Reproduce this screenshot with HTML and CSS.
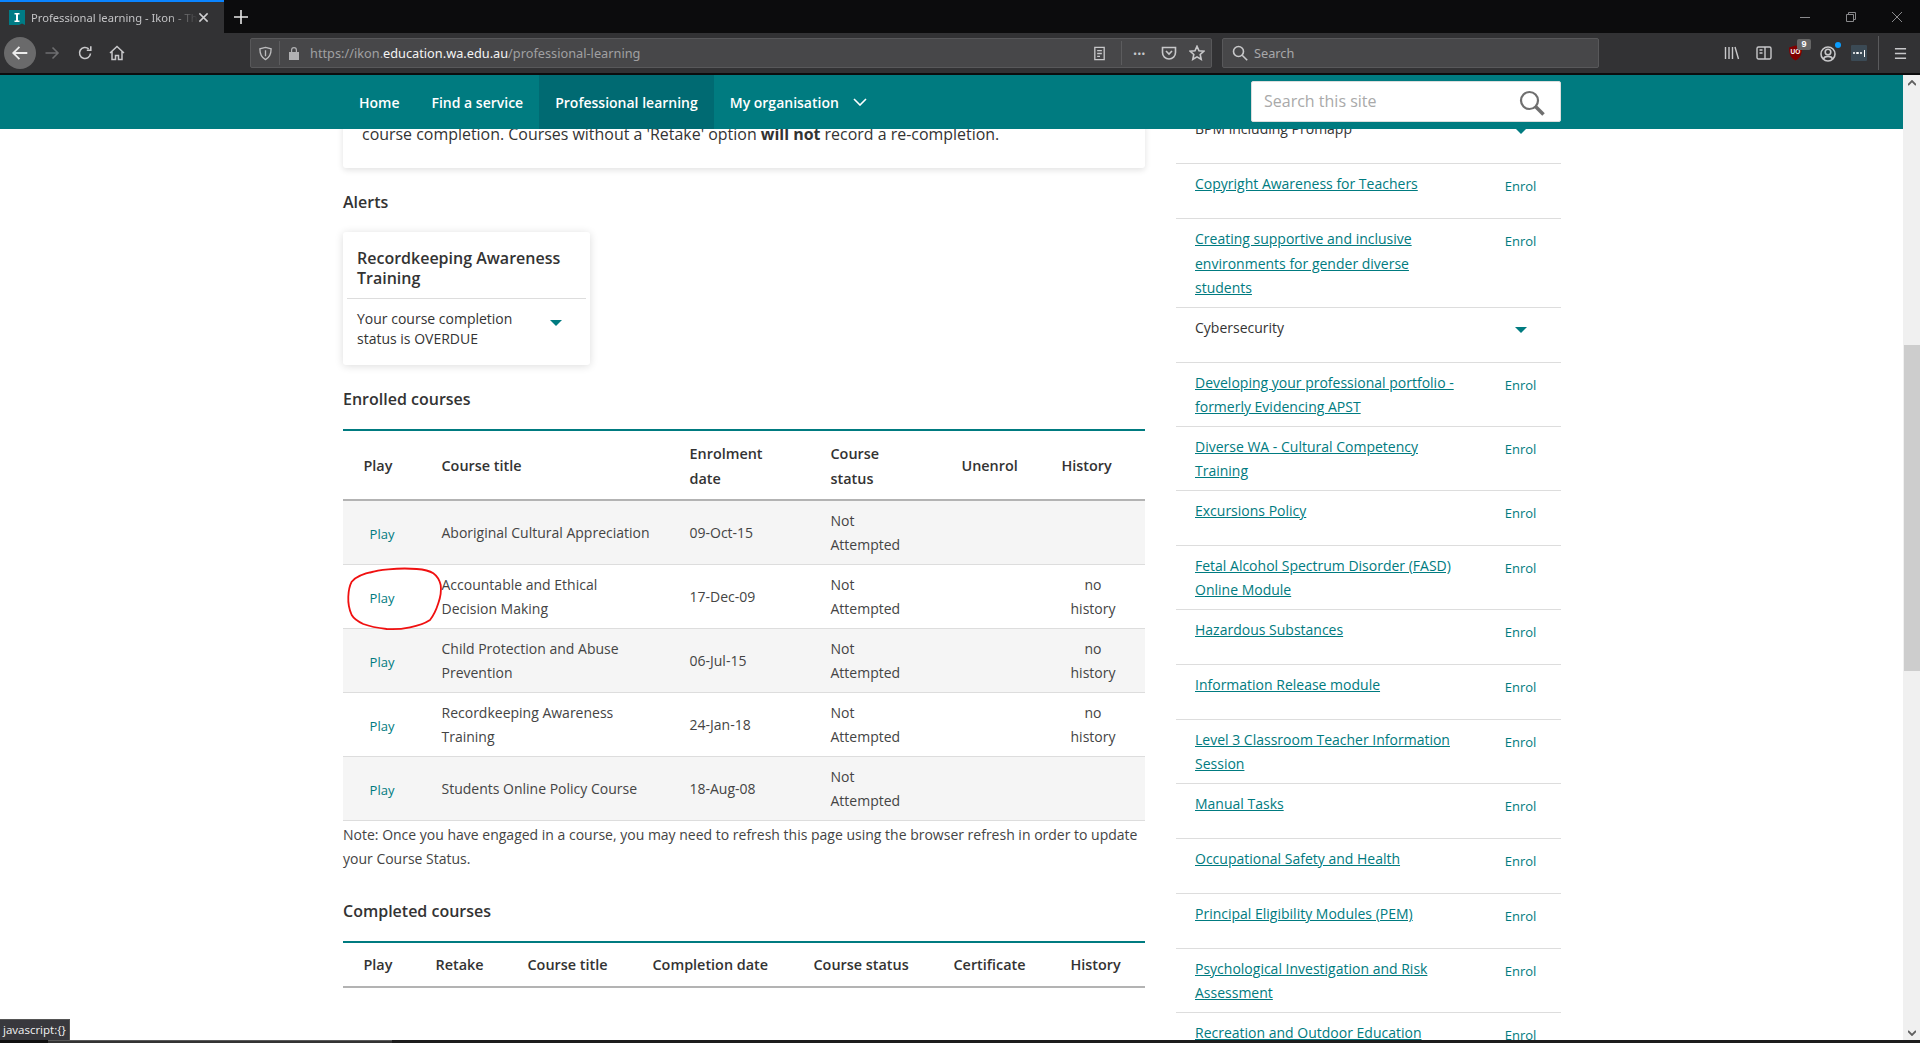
FILE: index.html
```html
<!DOCTYPE html>
<html lang="en">
<head>
<meta charset="utf-8">
<title>Professional learning - Ikon</title>
<link rel="stylesheet" href="styles.css">
</head>
<body>
<div class="browser">
  <header class="titlebar">
    <div class="tab">
      <svg class="favicon" viewBox="0 0 16 16"><path fill="#007b85" d="M0 0h16v15l-3-1.500-3 1.500H0z"/><path fill="#fff" d="M5.500 3h5v1.500H9v6h1.500V12h-5v-1.500H7v-6H5.500z"/></svg>
      <span class="tab-title">Professional learning - Ikon - The Department</span>
      <svg class="tab-close" viewBox="0 0 12 12"><path d="M1.500 1.500l9 9M10.500 1.500l-9 9"/></svg>
    </div>
    <svg class="newtab" viewBox="0 0 14 14"><path d="M7 0v14M0 7h14"/></svg>
    <div class="window-controls">
      <svg class="win-icon" viewBox="0 0 10 10"><path d="M0 5.500h10"/></svg>
      <svg class="win-icon" viewBox="0 0 10 10"><path d="M.5 2.500h7v7h-7zM2.500 2.500v-2h7v7h-2"/></svg>
      <svg class="win-icon" viewBox="0 0 10 10"><path d="M0 0l10 10M10 0L0 10"/></svg>
    </div>
  </header>
  <nav class="toolbar">
    <div class="nav-buttons">
      <span class="back"><svg class="tb-icon" viewBox="0 0 16 16"><path d="M14.500 8H2M7.500 2.500L2 8l5.500 5.500"/></svg></span>
      <svg class="tb-icon forward" viewBox="0 0 16 16"><path d="M1.500 8H14M8.500 2.500L14 8l-5.500 5.500"/></svg>
      <svg class="tb-icon reload" viewBox="0 0 16 16"><path d="M13.500 8.500a5.500 5.500 0 1 1-1.800-4.600M13.800 1.200v4h-4"/></svg>
      <svg class="tb-icon home" viewBox="0 0 16 16"><path d="M1 8l7-6.500L15 8M3 6.500V14.500h3.500v-4h3v4H13V6.500"/></svg>
    </div>
    <div class="urlbar">
      <svg class="tb-icon shield" viewBox="0 0 16 16"><path d="M8 1.500l6 1.500c0 5-1 9-6 11.500C3 12 2 8 2 3zM8 4.500v6.500"/></svg>
      <span class="sep"></span>
      <svg class="lock" viewBox="0 0 12 14"><path fill="#b1b1b3" d="M1 6h10v8H1zM3 6V4a3 3 0 0 1 6 0v2H7.800V4a1.800 1.800 0 0 0-3.600 0v2z"/></svg>
      <span class="url">https://ikon.<b>education.wa.edu.au</b>/professional-learning</span>
      <svg class="tb-icon reader" viewBox="0 0 16 16"><path d="M3 1.500h10v13H3zM5.500 5h5M5.500 8h5M5.500 11h3"/></svg>
      <span class="sep sep-wide"></span>
      <span class="dots">•••</span>
      <svg class="tb-icon pocket" viewBox="0 0 16 16"><path d="M1.500 2.500h13v5a6.500 6.500 0 0 1-13 0zM5 6l3 3 3-3"/></svg>
      <svg class="tb-icon star" viewBox="0 0 16 16"><path d="M8 1.300l2 4.500 4.800.5-3.600 3.200 1 4.800L8 11.900l-4.200 2.400 1-4.800L1.200 6.300 6 5.800z"/></svg>
    </div>
    <div class="searchbar">
      <svg class="tb-icon" viewBox="0 0 16 16"><circle cx="6.500" cy="6.500" r="5"/><path d="M10.200 10.200l5 5"/></svg>
      <span>Search</span>
    </div>
    <div class="tools">
      <svg class="tb-icon" viewBox="0 0 16 16"><path d="M1.500 2v12M5 2v12M8.500 2v12M11 2l3.500 12"/></svg>
      <svg class="tb-icon" viewBox="0 0 16 16"><path d="M2.500 2h11a1.500 1.500 0 0 1 1.500 1.500v9a1.500 1.500 0 0 1-1.500 1.500h-11A1.500 1.500 0 0 1 1 12.500v-9A1.500 1.500 0 0 1 2.500 2zM9 2v12M3.500 5H6.500M3.500 8H6.500"/></svg>
      <span class="ublock">
        <svg viewBox="0 0 14 16"><path fill="#800000" d="M7 0l7 2c0 7-1.500 11-7 14C1.500 13 0 9 0 2z"/></svg>
        <span class="ublock-mark">UO</span>
        <span class="badge">9</span>
      </span>
      <span class="account">
        <svg class="tb-icon" viewBox="0 0 16 16"><circle cx="8" cy="8" r="7"/><circle cx="8" cy="6" r="2.800"/><path d="M3.500 13c1-3.500 8-3.500 9 0"/></svg>
        <span class="dot"></span>
      </span>
      <span class="lastpass"><i></i><i></i><i></i><b></b></span>
      <span class="tools-sep"></span>
      <svg class="tb-icon" viewBox="0 0 14 14"><path d="M1 2h12M1 7h12M1 12h12"/></svg>
    </div>
  </nav>
  <div class="viewport">
    <div class="page">
      <div class="sitenav">
        <ul class="menu">
          <li class="menu-item">Home</li>
          <li class="menu-item">Find a service</li>
          <li class="menu-item active">Professional learning</li>
          <li class="menu-item">My organisation
            <svg class="chev" viewBox="0 0 14 8"><path d="M1 1l6 6 6-6"/></svg>
          </li>
        </ul>
        <div class="site-search">
          <span>Search this site</span>
          <svg viewBox="0 0 26 26"><circle cx="10.500" cy="10.500" r="8.500"/><path class="handle" d="M16.500 16.500l8 8"/></svg>
        </div>
      </div>
      <main class="content">
        <div class="left">
          <section class="intro-card">
            <p>course completion. Courses without a 'Retake' option <b>will not</b> record a re-completion.</p>
          </section>
          <h3 class="heading alerts-h">Alerts</h3>
          <article class="alert-card">
            <h4>Recordkeeping Awareness Training</h4>
            <div class="alert-body">
              <p>Your course completion status is OVERDUE</p>
              <span class="caret alert-caret"></span>
            </div>
          </article>
          <h3 class="heading">Enrolled courses</h3>
          <div class="table-wrap">
            <table class="courses">
              <colgroup><col class="c1"><col class="c2"><col class="c3"><col class="c4"><col class="c5"><col class="c6"></colgroup>
              <thead>
                <tr><th>Play</th><th>Course title</th><th>Enrolment date</th><th>Course status</th><th>Unenrol</th><th>History</th></tr>
              </thead>
              <tbody>
                <tr><td class="play">Play</td><td class="title">Aboriginal Cultural Appreciation</td><td>09-Oct-15</td><td>Not Attempted</td><td></td><td class="hist"></td></tr>
                <tr><td class="play">Play</td><td class="title">Accountable and Ethical Decision Making</td><td>17-Dec-09</td><td>Not Attempted</td><td></td><td class="hist">no history</td></tr>
                <tr><td class="play">Play</td><td class="title">Child Protection and Abuse Prevention</td><td>06-Jul-15</td><td>Not Attempted</td><td></td><td class="hist">no history</td></tr>
                <tr><td class="play">Play</td><td class="title">Recordkeeping Awareness Training</td><td>24-Jan-18</td><td>Not Attempted</td><td></td><td class="hist">no history</td></tr>
                <tr><td class="play">Play</td><td class="title">Students Online Policy Course</td><td>18-Aug-08</td><td>Not Attempted</td><td></td><td class="hist"></td></tr>
              </tbody>
            </table>
            <svg class="scribble" viewBox="0 0 100 70"><path d="M25 6.700C31 4.500 37 3.800 43.300 3.300C52 2.500 62 2.200 71.700 3C78 3.500 84 4.500 88.300 7.300C92 10 94.500 14 95.700 19C96.500 25 95.500 31 93.300 37.300C91.500 43 89 49 85 54C79 58 72 60 65 61.300C57 63 49 63.500 41.700 63C33 62 25 60.500 18.300 58C13 55.500 9 53 6.700 49C4 43 3 37 3.300 30.700C3.500 25 4.500 20 6.700 15.700C11 10.500 19 7.500 28.300 5.700"/></svg>
          </div>
          <p class="note">Note: Once you have engaged in a course, you may need to refresh this page using the browser refresh in order to update your Course Status.</p>
          <h3 class="heading completed-h">Completed courses</h3>
          <table class="courses completed">
            <colgroup><col class="d1"><col class="d2"><col class="d3"><col class="d4"><col class="d5"><col class="d6"><col class="d7"></colgroup>
            <thead>
              <tr><th>Play</th><th>Retake</th><th>Course title</th><th>Completion date</th><th>Course status</th><th>Certificate</th><th>History</th></tr>
            </thead>
          </table>
        </div>
        <aside class="right">
          <div class="row plain"><span class="name">BPM including Promapp</span><span class="action"><span class="caret"></span></span></div>
          <div class="row"><a class="name">Copyright Awareness for Teachers</a><span class="action">Enrol</span></div>
          <div class="row"><a class="name">Creating supportive and inclusive environments for gender diverse students</a><span class="action">Enrol</span></div>
          <div class="row plain"><span class="name">Cybersecurity</span><span class="action"><span class="caret"></span></span></div>
          <div class="row"><a class="name">Developing your professional portfolio - formerly Evidencing APST</a><span class="action">Enrol</span></div>
          <div class="row"><a class="name">Diverse WA - Cultural Competency Training</a><span class="action">Enrol</span></div>
          <div class="row"><a class="name">Excursions Policy</a><span class="action">Enrol</span></div>
          <div class="row"><a class="name">Fetal Alcohol Spectrum Disorder (FASD) Online Module</a><span class="action">Enrol</span></div>
          <div class="row"><a class="name">Hazardous Substances</a><span class="action">Enrol</span></div>
          <div class="row"><a class="name">Information Release module</a><span class="action">Enrol</span></div>
          <div class="row"><a class="name">Level 3 Classroom Teacher Information Session</a><span class="action">Enrol</span></div>
          <div class="row"><a class="name">Manual Tasks</a><span class="action">Enrol</span></div>
          <div class="row"><a class="name">Occupational Safety and Health</a><span class="action">Enrol</span></div>
          <div class="row"><a class="name">Principal Eligibility Modules (PEM)</a><span class="action">Enrol</span></div>
          <div class="row"><a class="name">Psychological Investigation and Risk Assessment</a><span class="action">Enrol</span></div>
          <div class="row"><a class="name">Recreation and Outdoor Education</a><span class="action">Enrol</span></div>
        </aside>
      </main>
    </div>
    <div class="scrollbar">
      <svg class="sb-arrow" viewBox="0 0 8 6"><path d="M0 5l4-4 4 4"/></svg>
      <div class="sb-thumb"></div>
      <svg class="sb-arrow sb-down" viewBox="0 0 8 6"><path d="M0 1l4 4 4-4"/></svg>
    </div>
    <div class="status">javascript:{}</div>
  </div>
  <div class="taskbar"><span class="task-a"></span><span class="task-b"></span></div>
</div>
</body>
</html>
```
FILE: styles.css
```css
* { box-sizing: border-box; }
html, body { margin: 0; height: 100%; }
body { font-family: "Open Sans", "Noto Sans", sans-serif; color: #333; background: #fff; overflow: hidden; }
.browser { height: 1043px; display: flex; flex-direction: column; }

.titlebar { height: 33px; background: #0c0c0d; display: flex; align-items: center; flex: none; }
.tab { width: 224px; height: 33px; background: #323234; border-top: 2px solid #0a84ff; display: flex; align-items: center; padding-left: 9px; }
.favicon { width: 16px; height: 16px; flex: none; }
.tab-title { font: 11.200px "Noto Sans", sans-serif; color: #c4c4c6; margin-left: 6px; width: 167px; white-space: nowrap; overflow: hidden; -webkit-mask-image: linear-gradient(to right, #000 82%, transparent); mask-image: linear-gradient(to right, #000 82%, transparent); }
.tab-close { width: 11px; height: 11px; flex: none; fill: none; stroke: #d0d0d2; stroke-width: 1.600; }
.newtab { width: 14px; height: 14px; margin-left: 10px; fill: none; stroke: #e8e8e8; stroke-width: 1.600; }
.window-controls { margin-left: auto; display: flex; gap: 36px; padding-right: 18px; }
.win-icon { width: 10px; height: 10px; fill: none; stroke: #8a8a8c; stroke-width: 1; }

.toolbar { height: 42px; background: #323234; border-bottom: 2px solid #0c0c0d; display: flex; align-items: center; flex: none; }
.tb-icon { width: 16px; height: 16px; fill: none; stroke: #c8c8ca; stroke-width: 1.600; flex: none; }
.nav-buttons { display: flex; align-items: center; width: 250px; padding-left: 4px; }
.back { width: 32px; height: 32px; border-radius: 50%; background: #6a6a6b; display: flex; align-items: center; justify-content: center; }
.back .tb-icon { stroke: #ececec; width: 18px; height: 18px; }
.forward { margin-left: 8px; stroke: #6e6e70; width: 16px; }
.reload { margin-left: 17px; }
.home { margin-left: 16px; stroke-width: 1.500; }

.urlbar, .searchbar { height: 30px; background: #474749; border: 1px solid #58585a; border-radius: 2px; display: flex; align-items: center; }
.urlbar { width: 962px; padding-left: 7px; }
.shield { width: 15px; height: 15px; stroke: #bcbcbe; stroke-width: 1.400; }
.sep { width: 1px; height: 24px; background: #5c5c5e; margin-left: 6px; }
.lock { width: 12px; height: 14px; margin-left: 8px; flex: none; }
.url { font: 12.750px "Noto Sans", sans-serif; color: #a0a0a2; margin-left: 10px; flex: 1; white-space: nowrap; }
.url b { font-weight: 400; color: #f4f4f4; }
.reader { width: 15px; height: 17px; stroke-width: 1.400; }
.sep-wide { margin-left: 14px; margin-right: 11px; }
.dots { font-size: 11px; line-height: 1; color: #c8c8ca; width: 20px; white-space: nowrap; letter-spacing: 0; }
.pocket { margin-left: 8px; }
.star { margin-left: 12px; margin-right: 6px; }
.searchbar { width: 377px; margin-left: 10px; padding-left: 9px; gap: 6px; font: 12.750px "Noto Sans", sans-serif; color: #a8a8aa; }
.tools { display: flex; align-items: center; margin-left: 125px; gap: 0; }
.tools > .tb-icon:nth-child(1) { margin-right: 16px; stroke-width: 1.400; }
.tools > .tb-icon:nth-child(2) { margin-right: 17px; stroke-width: 1.400; }
.ublock { position: relative; width: 14px; height: 16px; margin-right: 17px; }
.ublock svg { width: 13px; height: 16px; display: block; }
.ublock-mark { position: absolute; left: 1.500px; top: 3px; font: 700 6.500px "Liberation Sans", sans-serif; color: #fff; }
.badge { position: absolute; left: 8px; top: -6px; width: 14px; height: 11px; background: #666; border-radius: 2px; color: #fff; font: 700 9px/11px "Liberation Sans", sans-serif; text-align: center; }
.account { position: relative; width: 16px; height: 16px; margin-right: 15px; }
.account .dot { position: absolute; right: -5px; top: -3px; width: 6px; height: 6px; border-radius: 50%; background: #0a9dff; }
.lastpass { width: 16px; height: 16px; background: #3b4a55; border-radius: 1px; display: flex; align-items: center; justify-content: center; gap: 1px; }
.lastpass i { width: 2.500px; height: 2.500px; background: #fff; border-radius: 50%; }
.lastpass b { width: 1px; height: 7px; background: #fff; margin-left: 1px; }
.tools-sep { width: 1px; height: 34px; background: #5a5a5c; margin: 0 15px 0 11px; }
.tools > .tb-icon:last-child { width: 13px; height: 13px; stroke-width: 1.600; }

.viewport { flex: 1; display: flex; position: relative; min-height: 0; }
.page { flex: 1; min-width: 0; display: flex; flex-direction: column; }
.scrollbar { width: 17px; background: #f0f0f0; display: flex; flex-direction: column; align-items: center; padding-top: 5px; }
.sb-arrow { width: 8px; height: 6px; fill: none; stroke: #606060; stroke-width: 1.800; flex: none; }
.sb-thumb { width: 16px; height: 326px; background: #cdcdcd; margin-top: 259px; margin-left: 1px; }
.sb-down { margin-top: auto; margin-bottom: 4px; }
.status { position: absolute; left: 0; bottom: 0; height: 21px; width: 70px; background: #38383d; border: 1px solid #555; border-left: 0; border-bottom: 0; color: #f2f2f2; font: 11.500px/20px "Open Sans", sans-serif; padding-left: 3px; white-space: nowrap; }
.taskbar { height: 3px; background: #1c1c1c; display: flex; flex: none; }
.task-a { width: 48px; background: #101010; }
.task-b { width: 344px; background: #333; border-top: 1px solid #5a5a5a; }

.sitenav { height: 54px; background: #007b80; display: flex; flex: none; padding-left: 343px; position: relative; z-index: 2; }
.menu { list-style: none; margin: 0; padding: 0; display: flex; width: 908px; }
.menu-item { height: 54px; padding: 0 16px; color: #fff; font-size: 14px; font-weight: 600; display: flex; align-items: center; white-space: nowrap; }
.menu-item.active { background: #006a72; }
.chev { width: 14px; height: 8px; margin-left: 14px; fill: none; stroke: #fff; stroke-width: 1.600; }
.site-search { width: 310px; height: 41px; margin-top: 6px; background: #fff; border-radius: 2px; border: 1px solid #ddd; display: flex; align-items: center; justify-content: space-between; padding: 0 15px 2px 12px; color: #a9a9a9; font-size: 16px; }
.site-search svg { width: 26px; height: 26px; fill: none; stroke: #6f6f6f; stroke-width: 2.200; margin-top: 4px; }
.site-search .handle { stroke-width: 3.500; }

.content { flex: 1; min-height: 0; overflow: hidden; display: flex; padding-left: 343px; gap: 31px; background: #fff; }
.left { width: 802px; flex: none; margin-top: -7px; font-size: 14px; }
.intro-card { background: #fff; padding: 0 19px 22px; border-radius: 3px; box-shadow: 0 2px 6px rgba(0,0,0,.12); }
.intro-card p { margin: 0; font-size: 15.950px; line-height: 24px; white-space: nowrap; }
.heading { margin: 22px 0 18px; font-size: 16px; line-height: 24px; font-weight: 600; color: #333; }
.alert-card { width: 247px; height: 133px; padding: 16px 4px 16px; border-radius: 3px; box-shadow: 0 1px 8px rgba(0,0,0,.14); }
.alert-card h4 { margin: 0; padding: 0 10px 10px; font-size: 16px; line-height: 20px; font-weight: 600; border-bottom: 1px solid #ddd; }
.alert-body { display: flex; padding: 10px 10px 0; }
.alert-body p { margin: 0; width: 170px; font-size: 14px; line-height: 20px; }
.caret { display: inline-block; width: 0; height: 0; border-left: 6px solid transparent; border-right: 6px solid transparent; border-top: 6px solid #007b80; }
.alert-caret { margin: 11px 0 0 23px; }

.table-wrap { position: relative; }
.courses { width: 802px; table-layout: fixed; border-collapse: collapse; border-top: 2px solid #007b80; }
.courses th { text-align: left; font-weight: 600; padding: 11px 20px 8px 20.500px; font-size: 14.400px; line-height: 24.500px; border-bottom: 2px solid #b3b3b3; color: #333; }
.courses td { padding: 2px 20px 0 20.500px; height: 64px; font-size: 14px; line-height: 24px; border-bottom: 1px solid #ddd; color: #444; }
.courses tbody tr:nth-child(odd) { background: #f5f5f5; }
.courses td.play { padding: 3px 0 0; text-align: center; font-size: 13px; color: #007b80; }
.courses td.title { padding-right: 15px; }
.courses td.hist { text-align: center; padding-left: 20px; }
.c1 { width: 78px; } .c2 { width: 248px; } .c3 { width: 141px; } .c4 { width: 131px; } .c5 { width: 100px; } .c6 { width: 104px; }
.d1 { width: 72px; } .d2 { width: 92px; } .d3 { width: 125px; } .d4 { width: 161px; } .d5 { width: 140px; } .d6 { width: 117px; } .d7 { width: 95px; }
.completed th { height: 45px; padding-top: 3px; padding-bottom: 0; padding-right: 0; white-space: nowrap; }
.scribble { position: absolute; left: 2px; top: 137px; width: 100px; height: 70px; fill: none; stroke: #f01010; stroke-width: 1.800; pointer-events: none; }
.note { margin: 2px 0 0; line-height: 24px; font-size: 14px; color: #444; }
.completed-h { margin-top: 28px; }

.right { width: 385px; flex: none; margin-top: -20px; font-size: 14px; }
.row { display: flex; min-height: 55px; padding: 8px 0 6px 19px; border-bottom: 1px solid #ddd; line-height: 24.500px; }
.name { width: 265px; color: #007b80; text-decoration: underline; flex: none; }
.plain .name { color: #333; text-decoration: none; }
.action { flex: 1; text-align: center; padding-left: 20px; font-size: 13px; color: #007b80; padding-top: 2px; }
.plain .action { padding-top: 0; }
```
